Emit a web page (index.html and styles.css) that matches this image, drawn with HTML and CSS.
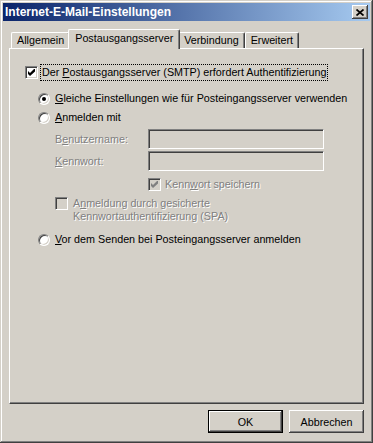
FILE: index.html
```html
<!DOCTYPE html>
<html>
<head>
  <title>Internet-E-Mail-Einstellungen</title>
  <link rel="stylesheet" href="styles.css">
</head>
<body>
  <div class="window">
    <div class="titlebar">
      <span class="title">Internet-E-Mail-Einstellungen</span>
      <span class="close">
        <svg width="8" height="7" viewBox="0 0 8 7"><path d="M0.5 0.5 L7.5 6.5 M7.5 0.5 L0.5 6.5" stroke="#000" stroke-width="1.7"/></svg>
      </span>
    </div>
    <div class="content">
      <div class="tabs">
        <div class="tab">Allgemein</div>
        <div class="tab active">Postausgangsserver</div>
        <div class="tab">Verbindung</div>
        <div class="tab">Erweitert</div>
      </div>
      <div class="panel">
        <div class="row auth">
          <span class="check">
            <svg width="7" height="7" viewBox="0 0 7 7"><path d="M0 2 L2 4 L6 0 L7 0 L7 2.5 L2 7 L0 5 Z" fill="#000"/></svg>
          </span>
          <span class="focus">Der <u>P</u>ostausgangsserver (SMTP) erfordert Authentifizierung</span>
        </div>
        <div class="row opt same">
          <span class="radio on"></span>
          <span><u>G</u>leiche Einstellungen wie für Posteingangsserver verwenden</span>
        </div>
        <div class="row opt login">
          <span class="radio"></span>
          <span><u>A</u>nmelden mit</span>
        </div>
        <div class="field user">
          <span class="disabled">B<u>e</u>nutzername:</span>
          <span class="textbox"></span>
        </div>
        <div class="field pass">
          <span class="disabled"><u>K</u>ennwort:</span>
          <span class="textbox"></span>
        </div>
        <div class="row save">
          <span class="check off">
            <svg width="7" height="7" viewBox="0 0 7 7"><path d="M0 2 L2 4 L6 0 L7 0 L7 2.5 L2 7 L0 5 Z" fill="#808080"/></svg>
          </span>
          <span class="disabled">Kenn<u>w</u>ort speichern</span>
        </div>
        <div class="row spa">
          <span class="check off"></span>
          <span class="disabled">A<u>n</u>meldung durch gesicherte<br>Kennwortauthentifizierung (SPA)</span>
        </div>
        <div class="row opt before">
          <span class="radio"></span>
          <span><u>V</u>or dem Senden bei Posteingangsserver anmelden</span>
        </div>
      </div>
      <div class="buttons">
        <button class="btn default">OK</button>
        <button class="btn">Abbrechen</button>
      </div>
    </div>
  </div>
</body>
</html>
```

FILE: styles.css
```css
body {
  margin: 0;
  font-family: "Liberation Sans", Arial, sans-serif;
  font-size: 10.75px;
  color: #000;
  background-color: #d4d0c8;
}

.window {
  width: 373px;
  height: 443px;
  box-sizing: border-box;
  padding: 3px;
  display: flex;
  flex-direction: column;
  background-color: #d4d0c8;
  box-shadow: inset -1px -1px #404040, inset 1px 1px #d4d0c8, inset -2px -2px #808080, inset 2px 2px #fff;
}

.titlebar {
  height: 18px;
  display: flex;
  align-items: center;
  justify-content: space-between;
  padding: 0 2px 0 2px;
  background: linear-gradient(to right, #0a246a, #a6caf0);
}

.title {
  color: #fff;
  font-weight: bold;
  font-size: 12px;
}

.close {
  width: 16px;
  height: 14px;
  box-sizing: border-box;
  display: flex;
  align-items: center;
  justify-content: center;
  background-color: #d4d0c8;
  box-shadow: inset -1px -1px #404040, inset 1px 1px #fff, inset -2px -2px #808080;
}

.content {
  flex: 1;
  display: flex;
  flex-direction: column;
  padding: 8px 6px 7px 6px;
}

.tabs {
  display: flex;
  align-items: flex-end;
  padding-left: 2px;
}

.tab {
  height: 16px;
  box-sizing: border-box;
  padding: 0 5px;
  line-height: 14px;
  border-top: 1px solid #fff;
  border-left: 1px solid #fff;
  border-right: 1px solid #404040;
  border-radius: 2px 2px 0 0;
  box-shadow: inset -1px 0 #808080;
  background-color: #d4d0c8;
}

.tab.active {
  height: 20px;
  margin: 0 -2px -1px -2px;
  padding: 0 6px;
  line-height: 16px;
  position: relative;
  z-index: 1;
}

.panel {
  flex: 1;
  border: 1px solid;
  border-color: #fff #404040 #404040 #fff;
  box-shadow: inset -1px -1px #808080;
  padding: 17px 0 0 15px;
}

.row {
  display: flex;
  align-items: center;
  line-height: 13px;
}

.auth .focus {
  margin-left: 4px;
  outline: 1px dotted #000;
  outline-offset: 1px;
}

.opt {
  margin-left: 13px;
  gap: 5px;
}

.same {
  margin-top: 13px;
}

.login {
  margin-top: 6px;
}

.before {
  margin-top: 10px;
}

.check {
  width: 13px;
  height: 13px;
  box-sizing: border-box;
  flex: none;
  display: flex;
  align-items: center;
  justify-content: center;
  background-color: #fff;
  border: 1px solid;
  border-color: #808080 #fff #fff #808080;
  box-shadow: inset 1px 1px #404040, inset -1px -1px #d4d0c8;
}

.check.off {
  background-color: #d4d0c8;
}

.radio {
  width: 12px;
  height: 12px;
  box-sizing: border-box;
  flex: none;
  position: relative;
  border-radius: 50%;
  background-color: #fff;
  border: 1px solid;
  border-color: #808080 #fff #fff #808080;
  box-shadow: inset 1px 1px #404040, inset -1px -1px #d4d0c8;
}

.radio.on::after {
  content: "";
  position: absolute;
  left: 3px;
  top: 3px;
  width: 4px;
  height: 4px;
  border-radius: 50%;
  background-color: #000;
}

.disabled {
  color: #808080;
  text-shadow: 1px 1px #fff;
}

.field {
  display: grid;
  grid-template-columns: 93px 176px;
  align-items: center;
  margin-left: 30px;
  line-height: 13px;
}

.user {
  margin-top: 5px;
}

.pass {
  margin-top: 2px;
}

.textbox {
  height: 20px;
  box-sizing: border-box;
  border: 1px solid;
  border-color: #808080 #fff #fff #808080;
  box-shadow: inset 1px 1px #404040, inset -1px -1px #d4d0c8;
}

.save {
  margin: 7px 0 0 123px;
  gap: 4px;
}

.spa {
  margin: 6px 0 0 30px;
  gap: 5px;
  align-items: flex-start;
}

.buttons {
  display: flex;
  justify-content: flex-end;
  gap: 6px;
  margin-top: 6px;
}

.btn {
  width: 75px;
  height: 23px;
  padding: 0;
  font-family: "Liberation Sans", Arial, sans-serif;
  font-size: 10.75px;
  color: #000;
  background-color: #d4d0c8;
  border: none;
  box-shadow: inset -1px -1px #404040, inset 1px 1px #fff, inset -2px -2px #808080, inset 2px 2px #d4d0c8;
}

.btn.default {
  border: 1px solid #000;
}
```
